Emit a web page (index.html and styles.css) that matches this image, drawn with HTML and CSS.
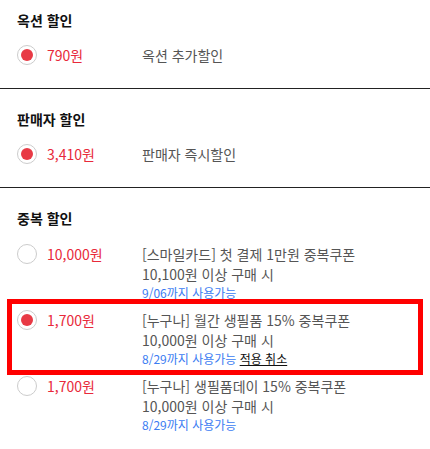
FILE: index.html
```html
<!DOCTYPE html>
<html lang="ko">
  <head>
    <meta charset="UTF-8" />
    <meta name="viewport" content="width=device-width, initial-scale=1.0" />
    <title>할인 선택</title>
    <link rel="stylesheet" href="styles.css">
  </head>
  <body>
    <div class="discount-section">
      <h3 class="section-title">옥션 할인</h3>
      <ul class="option-list">
        <li class="option">
          <span class="radio checked"></span>
          <span class="price">790원</span>
          <div class="desc">
            <p>옥션 추가할인</p>
          </div>
        </li>
      </ul>
    </div>

    <div class="discount-section">
      <h3 class="section-title">판매자 할인</h3>
      <ul class="option-list">
        <li class="option">
          <span class="radio checked"></span>
          <span class="price">3,410원</span>
          <div class="desc">
            <p>판매자 즉시할인</p>
          </div>
        </li>
      </ul>
    </div>

    <div class="discount-section last">
      <h3 class="section-title">중복 할인</h3>
      <ul class="option-list coupons">
        <li class="option">
          <span class="radio"></span>
          <span class="price">10,000원</span>
          <div class="desc">
            <p>[스마일카드] 첫 결제 1만원 중복쿠폰</p>
            <p>10,100원 이상 구매 시</p>
            <p class="expire">9/06까지 사용가능</p>
          </div>
        </li>
        <li class="option selected">
          <span class="radio checked"></span>
          <span class="price">1,700원</span>
          <div class="desc">
            <p>[누구나] 월간 생필품 15% 중복쿠폰</p>
            <p>10,000원 이상 구매 시</p>
            <p class="expire">8/29까지 사용가능 <a href="#" class="cancel">적용 취소</a></p>
          </div>
        </li>
        <li class="option">
          <span class="radio"></span>
          <span class="price">1,700원</span>
          <div class="desc">
            <p>[누구나] 생필품데이 15% 중복쿠폰</p>
            <p>10,000원 이상 구매 시</p>
            <p class="expire">8/29까지 사용가능</p>
          </div>
        </li>
      </ul>
    </div>
  </body>
</html>
```

FILE: styles.css
```css
body {
  margin: 0;
  background: #ffffff;
  font-family: "Noto Sans CJK KR", "Noto Sans", sans-serif;
  color: #555555;
}
.discount-section {
  padding: 20px 0 23px 17px;
  border-bottom: 1px solid #222222;
}
.discount-section:first-child {
  padding-top: 10px;
}
.discount-section.last {
  border-bottom: none;
}
.section-title {
  margin: 0;
  font-size: 14px;
  line-height: 20px;
  font-weight: bold;
  color: #111111;
}
.option-list {
  list-style: none;
  margin: 15px 0 0;
  padding: 0;
}
.option {
  display: flex;
  align-items: flex-start;
}
.coupons {
  margin: 10px 12px 0 -5px;
}
.coupons .option {
  padding: 6px 0 2px 5px;
}
.coupons .option.selected {
  outline: 5px solid #ff0000;
}
.radio {
  box-sizing: border-box;
  width: 20px;
  height: 20px;
  border: 1px solid #cccccc;
  border-radius: 50%;
  margin-right: 10px;
  flex-shrink: 0;
  position: relative;
}
.radio.checked::after {
  content: "";
  position: absolute;
  left: 3px;
  top: 3px;
  width: 12px;
  height: 12px;
  border-radius: 50%;
  background: #e83a45;
}
.price {
  width: 95px;
  flex-shrink: 0;
  font-size: 14px;
  line-height: 20px;
  color: #e8293a;
}
.desc p {
  margin: 0;
  font-size: 14px;
  line-height: 20px;
}
.desc p.expire {
  font-size: 12px;
  line-height: 18px;
  color: #3b7cf2;
}
.cancel {
  color: #111111;
  text-decoration: underline;
}
```
